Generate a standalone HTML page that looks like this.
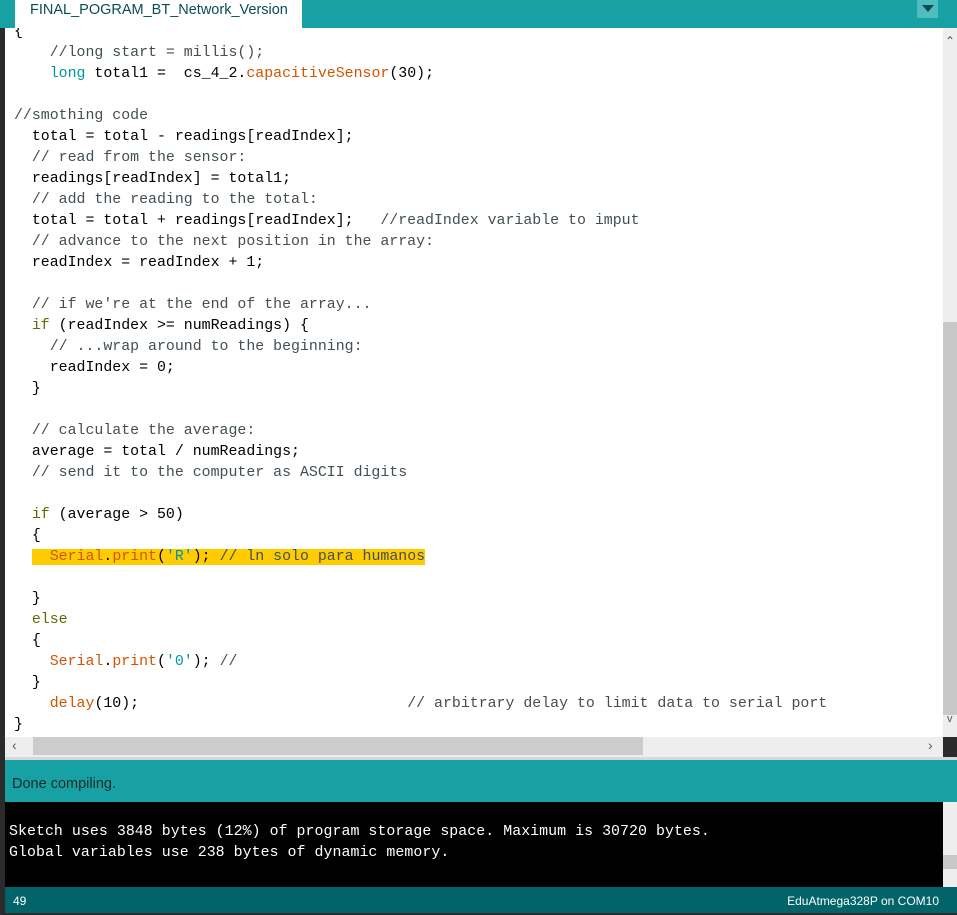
<!DOCTYPE html>
<html><head><meta charset="utf-8"><style>
*{margin:0;padding:0;box-sizing:border-box}
body{width:957px;height:915px;overflow:hidden;background:#2b2b2b;position:relative;font-family:"Liberation Sans",sans-serif}
.abs{position:absolute}
#tabbar{left:0;top:0;width:957px;height:28px;background:#17a1a5}
#tab{left:15px;top:0;width:287px;height:28px;background:#fff;color:#0b4d52;font-size:14.5px;padding:2px 0 0 15px}
#dd{left:917px;top:0;width:21px;height:18px;background:#4fbcc0}
#dd:after{content:"";position:absolute;left:5px;top:5px;border-left:6px solid transparent;border-right:6px solid transparent;border-top:7px solid #0b4d52}
#code{left:5px;top:28px;width:938px;height:709px;background:#fff;overflow:hidden}
pre{position:absolute;left:9px;top:-6.5px;font-family:"Liberation Mono",monospace;font-size:14.9px;line-height:21px;color:#000}
.c{color:#434f54}.k{color:#00979c}.f{color:#d35400}.o{color:#5e6d03}.b{color:#000}
.hl{background:#ffcc00}
#vs{left:943px;top:28px;width:14px;height:709px;background:#eeeeee}
#vt{left:943px;top:322px;width:14px;height:393px;background:#c8c8c8}
#hs{left:5px;top:737px;width:938px;height:20px;background:#eeeeee}
#ht{left:33px;top:737px;width:610px;height:18px;background:#cccccc}
#status{left:5px;top:760px;width:952px;height:42px;background:#17a1a5;color:#1a2a2a;font-size:14.5px;padding:16px 0 0 7px}
#console{left:5px;top:802px;width:938px;height:85px;background:#000}
#console pre{left:4px;top:20px;color:#fff;font-size:14.9px;line-height:21px;letter-spacing:0.05px}
#cs{left:943px;top:802px;width:14px;height:85px;background:#eeeeee}
#bottom{left:5px;top:887px;width:952px;height:26px;background:#006468;color:#fff;font-size:12px}
</style></head><body>
<div class="abs" id="tabbar"></div>
<div class="abs" id="tab">FINAL_POGRAM_BT_Network_Version</div>
<div class="abs" id="dd"></div>
<div class="abs" id="code"><pre><span class="b">{</span>
    <span class="c">//long start = millis();</span>
    <span class="k">long</span> total1 =  cs_4_2.<span class="f">capacitiveSensor</span>(30);

<span class="c">//smothing code</span>
  total = total - readings[readIndex];
  <span class="c">// read from the sensor:</span>
  readings[readIndex] = total1;
  <span class="c">// add the reading to the total:</span>
  total = total + readings[readIndex];   <span class="c">//readIndex variable to imput</span>
  <span class="c">// advance to the next position in the array:</span>
  readIndex = readIndex + 1;

  <span class="c">// if we're at the end of the array...</span>
  <span class="o">if</span> (readIndex &gt;= numReadings) <span class="b">{</span>
    <span class="c">// ...wrap around to the beginning:</span>
    readIndex = 0;
  <span class="b">}</span>

  <span class="c">// calculate the average:</span>
  average = total / numReadings;
  <span class="c">// send it to the computer as ASCII digits</span>

  <span class="o">if</span> (average &gt; 50)
  <span class="b">{</span>
  <span class="hl">  <span class="f">Serial</span>.<span class="f">print</span>(<span class="k">'R'</span>); <span class="c">// ln solo para humanos</span></span>

  <span class="b">}</span>
  <span class="o">else</span>
  <span class="b">{</span>
    <span class="f">Serial</span>.<span class="f">print</span>(<span class="k">'0'</span>); <span class="c">//</span>
  <span class="b">}</span>
    <span class="f">delay</span>(10);                              <span class="c">// arbitrary delay to limit data to serial port</span>
<span class="b">}</span></pre></div>
<div class="abs" id="vs"></div>
<div class="abs" id="vt"></div>
<div class="abs" style="left:945px;top:34px;color:#555;font-size:12px">&#8963;</div>
<div class="abs" style="left:947px;top:713px;color:#555;font-size:11px">v</div>
<div class="abs" id="hs"></div>
<div class="abs" id="ht"></div>
<div class="abs" style="left:12px;top:737px;color:#555;font-size:14px">&#8249;</div>
<div class="abs" style="left:928px;top:737px;color:#555;font-size:14px">&#8250;</div>
<div class="abs" style="left:5px;top:757px;width:952px;height:3px;background:#d8d8d8"></div>
<div class="abs" id="status">Done compiling.</div>
<div class="abs" id="console"><pre>Sketch uses 3848 bytes (12%) of program storage space. Maximum is 30720 bytes.
Global variables use 238 bytes of dynamic memory.</pre></div>
<div class="abs" id="cs"></div>
<div class="abs" style="left:943px;top:855px;width:14px;height:14px;background:#c8c8c8"></div>
<div class="abs" id="bottom"><span class="abs" style="left:8px;top:7px">49</span><span class="abs" style="right:18px;top:7px">EduAtmega328P on COM10</span></div>
</body></html>
